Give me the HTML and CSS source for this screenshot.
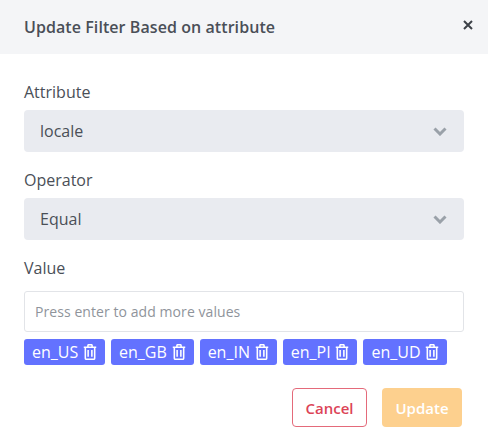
FILE: index.html
```html
<!doctype html>
<html lang="en">
<head>
  <meta charset="UTF-8" />
  <meta name="viewport" content="width=device-width, initial-scale=1" />
  <title>Update Filter</title>
  <link rel="stylesheet" href="styles.css">
</head>
<body>
  <div class="modal">
    <div class="modal-header">
      <h2 class="modal-title">Update Filter Based on attribute</h2>
      <svg class="close-icon" viewBox="0 0 10 10" width="10" height="10"><path d="M1 1l8 8M9 1l-8 8" /></svg>
    </div>

    <div class="modal-body">
      <div class="field">
        <label class="field-label">Attribute</label>
        <div class="select-box">
          <span>locale</span>
          <svg class="chevron" viewBox="0 0 14 9" width="14" height="9"><path d="M1.500 1.500L7 7l5.500-5.500" /></svg>
        </div>
      </div>

      <div class="field">
        <label class="field-label">Operator</label>
        <div class="select-box">
          <span>Equal</span>
          <svg class="chevron" viewBox="0 0 14 9" width="14" height="9"><path d="M1.500 1.500L7 7l5.500-5.500" /></svg>
        </div>
      </div>

      <div class="field">
        <label class="field-label field-label-value">Value</label>
        <input class="text-input" type="text" placeholder="Press enter to add more values" />
      </div>

      <div class="tags">
        <span class="tag">en_US <svg class="trash" viewBox="0.3 0.3 13.400 15.400" width="14" height="16"><path d="M1 3.500h12M2.500 3.500v10.500a1 1 0 0 0 1 1h7a1 1 0 0 0 1-1V3.500M5 3.500V1.800a.8.8 0 0 1 .8-.8h2.400a.8.8 0 0 1 .8.8v1.700M5.200 6v6.500M8.800 6v6.500" /></svg></span>
        <span class="tag">en_GB <svg class="trash" viewBox="0.3 0.3 13.400 15.400" width="14" height="16"><path d="M1 3.500h12M2.500 3.500v10.500a1 1 0 0 0 1 1h7a1 1 0 0 0 1-1V3.500M5 3.500V1.800a.8.8 0 0 1 .8-.8h2.400a.8.8 0 0 1 .8.8v1.700M5.200 6v6.500M8.800 6v6.500" /></svg></span>
        <span class="tag">en_IN <svg class="trash" viewBox="0.3 0.3 13.400 15.400" width="14" height="16"><path d="M1 3.500h12M2.500 3.500v10.500a1 1 0 0 0 1 1h7a1 1 0 0 0 1-1V3.500M5 3.500V1.800a.8.8 0 0 1 .8-.8h2.400a.8.8 0 0 1 .8.8v1.700M5.200 6v6.500M8.800 6v6.500" /></svg></span>
        <span class="tag">en_PI <svg class="trash" viewBox="0.3 0.3 13.400 15.400" width="14" height="16"><path d="M1 3.500h12M2.500 3.500v10.500a1 1 0 0 0 1 1h7a1 1 0 0 0 1-1V3.500M5 3.500V1.800a.8.8 0 0 1 .8-.8h2.400a.8.8 0 0 1 .8.8v1.700M5.200 6v6.500M8.800 6v6.500" /></svg></span>
        <span class="tag">en_UD <svg class="trash" viewBox="0.3 0.3 13.400 15.400" width="14" height="16"><path d="M1 3.500h12M2.500 3.500v10.500a1 1 0 0 0 1 1h7a1 1 0 0 0 1-1V3.500M5 3.500V1.800a.8.8 0 0 1 .8-.8h2.400a.8.8 0 0 1 .8.8v1.700M5.200 6v6.500M8.800 6v6.500" /></svg></span>
      </div>

      <div class="actions">
        <button class="btn btn-cancel">Cancel</button>
        <button class="btn btn-update">Update</button>
      </div>
    </div>
  </div>
</body>
</html>
```

FILE: styles.css
```css
body {
  margin: 0;
  background: #fff;
  color: #4a4f57;
  font-family: "Open Sans", "Noto Sans", sans-serif;
}
.modal {
  width: 488px;
  height: 434px;
  overflow: hidden;
}
.modal-header {
  display: flex;
  align-items: center;
  justify-content: space-between;
  height: 54px;
  padding: 0 15px 0 24px;
  background: #f4f5f7;
}
.modal-title {
  margin: 0;
  font-size: 16px;
  font-weight: 600;
  letter-spacing: 0.07px;
  color: #4a4f57;
}
.close-icon {
  fill: none;
  stroke: #3c4148;
  stroke-width: 2;
  margin-bottom: 4px;
}
.modal-body {
  padding: 26px 24px 0;
}
.field {
  margin-bottom: 16px;
}
.field-label {
  display: block;
  height: 30px;
  font-size: 16px;
  line-height: 24px;
}
.field-label-value {
  height: 35px;
}
.select-box {
  display: flex;
  align-items: center;
  justify-content: space-between;
  height: 42px;
  box-sizing: border-box;
  padding: 0 17px 0 16px;
  background: #e9ebf0;
  border-radius: 4px;
  font-size: 16px;
}
.chevron {
  fill: none;
  stroke: #9aa1a9;
  stroke-width: 3;
}
.text-input {
  display: block;
  width: 100%;
  height: 41px;
  box-sizing: border-box;
  padding: 0 10px;
  border: 1px solid #e2e4e8;
  border-radius: 3px;
  font-family: inherit;
  font-size: 14px;
  letter-spacing: 0.07px;
}
.text-input::placeholder {
  color: #8f949b;
}
.tags {
  display: flex;
  gap: 6px;
  margin-top: -9px;
}
.tag {
  display: flex;
  align-items: center;
  gap: 4.800px;
  height: 26px;
  padding: 0 8px;
  background: #6372ff;
  border-radius: 3px;
  color: #fff;
  font-size: 16px;
}
.trash {
  fill: none;
  stroke: #fff;
  stroke-width: 1.500;
}
.actions {
  display: flex;
  justify-content: flex-end;
  gap: 15px;
  margin-top: 23px;
  padding-right: 2px;
}
.btn {
  height: 39px;
  border-radius: 4px;
  font-family: inherit;
  font-size: 15px;
  font-weight: 600;
}
.btn-cancel {
  width: 75px;
  background: #fff;
  border: 1.500px solid #e46a7a;
  color: #dc4457;
}
.btn-update {
  width: 80px;
  background: #fdd08e;
  border: 0;
  color: #fff;
}
```
